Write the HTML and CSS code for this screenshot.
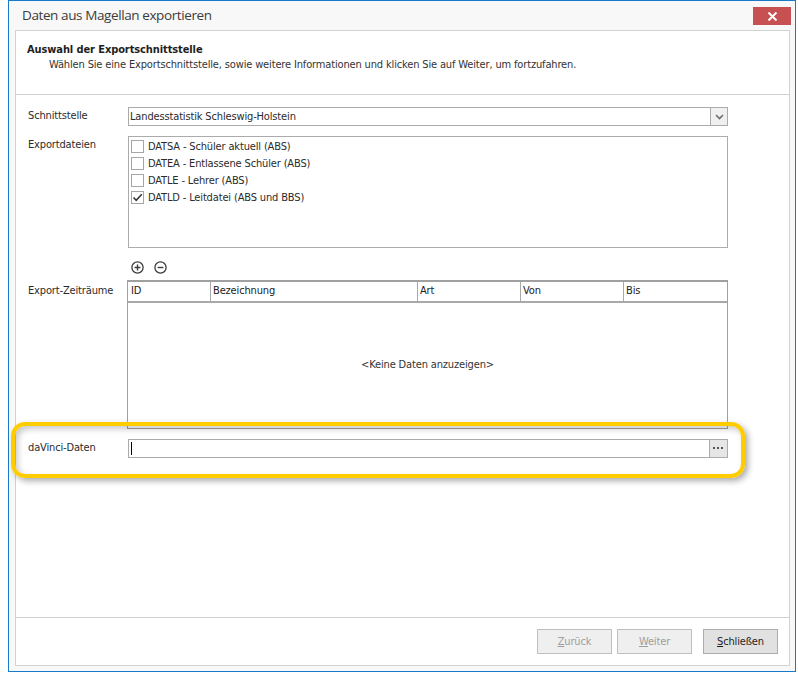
FILE: index.html
```html
<!DOCTYPE html>
<html lang="de">
<head>
<meta charset="utf-8">
<title>Daten aus Magellan exportieren</title>
<link rel="stylesheet" href="styles.css">
</head>
<body>
<div class="window">
  <div class="titlebar">
    <span class="title">Daten aus Magellan exportieren</span>
    <span class="close">
      <svg width="11" height="9" viewBox="0 0 11 9"><path d="M1.5 0.5 L9.5 8.5 M9.5 0.5 L1.5 8.5" stroke="#fff" stroke-width="2"/></svg>
    </span>
  </div>
  <div class="panel">
    <div class="header">
      <div class="h-title">Auswahl der Exportschnittstelle</div>
      <div class="h-sub">Wählen Sie eine Exportschnittstelle, sowie weitere Informationen und klicken Sie auf Weiter, um fortzufahren.</div>
    </div>
    <div class="body">
      <div class="row row-combo">
        <div class="label">Schnittstelle</div>
        <div class="combo">
          <span class="combo-text">Landesstatistik Schleswig-Holstein</span>
          <span class="combo-btn">
            <svg width="9" height="6" viewBox="0 0 9 6"><path d="M1 1 L4.5 4.5 L8 1" fill="none" stroke="#6d6d6d" stroke-width="1.6"/></svg>
          </span>
        </div>
      </div>
      <div class="row row-list">
        <div class="label">Exportdateien</div>
        <div class="listbox">
          <div class="item"><span class="check"></span><span>DATSA - Schüler aktuell (ABS)</span></div>
          <div class="item"><span class="check"></span><span>DATEA - Entlassene Schüler (ABS)</span></div>
          <div class="item"><span class="check"></span><span>DATLE - Lehrer (ABS)</span></div>
          <div class="item"><span class="check checked"><svg width="11" height="11" viewBox="0 0 11 11"><path d="M1.5 5.5 L4.2 8.3 L9.8 2.2" fill="none" stroke="#333" stroke-width="1.5"/></svg></span><span>DATLD - Leitdatei (ABS und BBS)</span></div>
        </div>
      </div>
      <div class="row row-icons">
        <div class="label"></div>
        <div class="icons">
          <svg width="13" height="13" viewBox="0 0 13 13"><circle cx="6.5" cy="6.5" r="5.6" fill="none" stroke="#3a3a3a" stroke-width="1.3"/><path d="M6.5 3.6 V9.4 M3.6 6.5 H9.4" stroke="#3a3a3a" stroke-width="1.4"/></svg>
          <svg width="13" height="13" viewBox="0 0 13 13"><circle cx="6.5" cy="6.5" r="5.6" fill="none" stroke="#3a3a3a" stroke-width="1.3"/><path d="M3.6 6.5 H9.4" stroke="#3a3a3a" stroke-width="1.4"/></svg>
        </div>
      </div>
      <div class="row row-grid">
        <div class="label label-grid">Export-Zeiträume</div>
        <div class="grid">
          <div class="grid-head">
            <div class="col c-id">ID</div>
            <div class="col c-bez">Bezeichnung</div>
            <div class="col c-art">Art</div>
            <div class="col c-von">Von</div>
            <div class="col c-bis">Bis</div>
          </div>
          <div class="grid-body">&lt;Keine Daten anzuzeigen&gt;</div>
        </div>
      </div>
      <div class="row row-input">
        <div class="label">daVinci-Daten</div>
        <div class="input">
          <span class="caret"></span>
          <span class="input-btn">
            <svg width="11" height="3" viewBox="0 0 11 3"><rect x="0" y="0" width="2" height="2" fill="#555"/><rect x="4" y="0" width="2" height="2" fill="#555"/><rect x="8" y="0" width="2" height="2" fill="#555"/></svg>
          </span>
        </div>
      </div>
      <div class="highlight"></div>
    </div>
    <div class="footer">
      <button class="btn disabled btn-back"><u>Z</u>urück</button>
      <button class="btn disabled btn-next"><u>W</u>eiter</button>
      <button class="btn"><u>S</u>chließen</button>
    </div>
  </div>
</div>
</body>
</html>
```
FILE: styles.css
```css
html, body {
  margin: 0;
  padding: 0;
  background: #ffffff;
}

.window {
  margin-left: 8px;
  width: 788px;
  height: 672px;
  box-sizing: border-box;
  border: 1px solid #1979ca;
  background: #f8f8f8;
  display: flex;
  flex-direction: column;
  font-family: "DejaVu Sans Condensed", "Liberation Sans", sans-serif;
  font-size: 11px;
  letter-spacing: -0.15px;
  color: #2b2b2b;
}

.titlebar {
  height: 29px;
  flex: none;
  display: flex;
  align-items: flex-start;
  justify-content: space-between;
}

.title {
  font-family: "Open Sans", "Noto Sans", sans-serif;
  font-size: 13.5px;
  letter-spacing: -0.4px;
  color: #3c3c3c;
  margin-left: 13px;
  margin-top: 5px;
  line-height: 18px;
}

.close {
  width: 38px;
  height: 18px;
  background: #c75050;
  margin-top: 6px;
  margin-right: 4px;
  display: flex;
  align-items: center;
  justify-content: center;
}

.panel {
  flex: 1;
  margin: 0 5px 5px 6px;
  border: 1px solid #d2d2d2;
  background: #ffffff;
  display: flex;
  flex-direction: column;
  min-height: 0;
}

.header {
  flex: none;
  border-bottom: 1px solid #d2d2d2;
  padding: 11px 0 0 11px;
  box-sizing: border-box;
  height: 64px;
}

.h-title {
  font-weight: bold;
  letter-spacing: -0.1px;
  line-height: 15px;
  color: #1e1e1e;
}

.h-sub {
  line-height: 15px;
  padding-left: 22px;
  color: #333;
}

.body {
  flex: 1;
  position: relative;
  padding: 12px 0 0 12px;
}

.row {
  display: flex;
  align-items: flex-start;
}

.label {
  width: 100px;
  flex: none;
  line-height: 17px;
  color: #2b2b2b;
}

.label-grid {
  padding-top: 2px;
}

.row-list { margin-top: 10px; }
.row-icons { margin-top: 13px; }
.row-grid { margin-top: 5px; }
.row-input { margin-top: 10px; }

.combo {
  width: 600px;
  height: 19px;
  box-sizing: border-box;
  border: 1px solid #ababab;
  display: flex;
  align-items: center;
  justify-content: space-between;
}

.combo-text {
  padding-left: 1px;
  line-height: 17px;
}

.combo-btn {
  width: 16px;
  height: 17px;
  border-left: 1px solid #ababab;
  background: #f0f0f0;
  display: flex;
  align-items: center;
  justify-content: center;
}

.listbox {
  width: 600px;
  height: 112px;
  box-sizing: border-box;
  border: 1px solid #ababab;
  padding: 1px 0 0 2px;
}

.item {
  height: 17px;
  display: flex;
  align-items: center;
  gap: 4px;
}

.check {
  width: 13px;
  height: 13px;
  box-sizing: border-box;
  border: 1px solid #a6a6a6;
  background: #fff;
  display: flex;
  align-items: center;
  justify-content: center;
}

.icons {
  display: flex;
  gap: 10px;
  padding-left: 3px;
  height: 14px;
}

.grid {
  width: 601px;
  height: 149px;
  margin-left: -1px;
  box-sizing: border-box;
  border: 1px solid #a0a0a0;
  border-top-width: 2px;
  display: flex;
  flex-direction: column;
}

.grid-head {
  display: flex;
  height: 19px;
  border-bottom: 2px solid #a9a9a9;
  flex: none;
}

.col {
  box-sizing: border-box;
  border-right: 1px solid #a9a9a9;
  padding: 1px 0 0 2px;
  line-height: 15px;
  color: #222;
}

.c-id { width: 83px; padding-left: 3px; }
.c-bez { width: 207px; }
.c-art { width: 103px; }
.c-von { width: 103px; }
.c-bis { flex: 1; border-right: none; }

.grid-body {
  flex: 1;
  display: flex;
  align-items: center;
  justify-content: center;
  color: #333;
  padding-bottom: 2px;
}

.input {
  width: 600px;
  height: 19px;
  box-sizing: border-box;
  border: 1px solid #ababab;
  display: flex;
  align-items: center;
  justify-content: space-between;
}

.caret {
  width: 1px;
  height: 13px;
  background: #000;
  margin-left: 2px;
}

.input-btn {
  width: 17px;
  height: 17px;
  border-left: 1px solid #ababab;
  background: #e6e6e6;
  display: flex;
  align-items: center;
  justify-content: center;
}

.highlight {
  position: absolute;
  left: -5px;
  top: 327px;
  width: 734px;
  height: 56px;
  box-sizing: border-box;
  border: 4px solid #ffcc00;
  border-radius: 14px;
  box-shadow: 3px 3px 6px rgba(0, 0, 0, 0.33), inset 3px 3px 6px rgba(0, 0, 0, 0.22);
  pointer-events: none;
}

.footer {
  flex: none;
  height: 48px;
  box-sizing: border-box;
  border-top: 1px solid #d2d2d2;
  display: flex;
  justify-content: flex-end;
  align-items: flex-start;
  padding: 11px 11px 0 0;
}

.btn {
  width: 75px;
  height: 25px;
  box-sizing: border-box;
  border: 1px solid #adadad;
  background: #e1e1e1;
  font-family: inherit;
  font-size: 11px;
  letter-spacing: -0.15px;
  color: #1e1e1e;
  padding: 0;
  margin: 0;
}

.btn u { text-decoration: underline; }

.btn.disabled {
  border-color: #bfbfbf;
  background: #efefef;
  color: #9d9d9d;
}

.btn-back { margin-right: 5px; }
.btn-next { margin-right: 11px; }
```
